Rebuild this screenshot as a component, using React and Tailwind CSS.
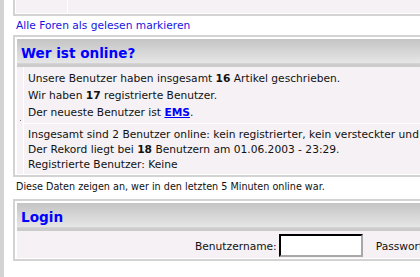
import React from "react";

const cellBg = "bg-[#f5f1f5]";
const headBg =
  "bg-[linear-gradient(180deg,#c4c4c4_0%,#e6e6e6_86%,#cdcdcd_88%,#cbcbcb_100%)]";

const CatHead = ({ title }) => (
  <div className={`flex h-[28px] items-center pl-[4px] ${headBg}`}>
    <span className="text-[13.6px] font-bold text-[#0000ff]">{title}</span>
  </div>
);

const App = () => {
  return (
    <div className="flex h-[277px] w-[420px] overflow-hidden bg-white font-['DejaVu_Sans',sans-serif] text-[10.67px] text-[#111]">
      <div className="w-[4px] shrink-0 bg-[#d3d3d3]" />
      <div className="w-[660px] shrink-0 pl-[9px]">
        {/* tail of the forum table */}
        <div className="border-x-2 border-b-2 border-[#d3d3d3] bg-white px-[1px] pb-[1px]">
          <div className="flex h-[13px] gap-[1px]">
            <div className={`w-[51px] ${cellBg}`} />
            <div className={`flex-1 ${cellBg}`} />
          </div>
        </div>

        <a className="ml-[3px] mt-[4px] block leading-[12px] text-[#1515e0]">
          Alle Foren als gelesen markieren
        </a>

        {/* who is online */}
        <div className="mt-[3px] border-2 border-[#d3d3d3] bg-white pb-[1px] pl-[2px] pt-[2px]">
          <CatHead title="Wer ist online?" />
          <div className="flex gap-[1px]">
            <div className={`flex w-[6px] items-center justify-center ${cellBg}`}>
              <div className="h-[1px] w-[1px] bg-[#777]" />
            </div>
            <div className="flex flex-1 flex-col gap-[1px] whitespace-nowrap">
              <div className={`${cellBg} pb-[2px] pl-[4px] pt-[3px] leading-[17px]`}>
                Unsere Benutzer haben insgesamt <b>16</b> Artikel geschrieben.
                <br />
                Wir haben <b>17</b> registrierte Benutzer.
                <br />
                Der neueste Benutzer ist{" "}
                <a className="font-bold text-[#0000ff] underline">EMS</a>.
              </div>
              <div className={`${cellBg} pb-[2px] pl-[4px] pt-[3px] leading-[15px]`}>
                Insgesamt sind 2 Benutzer online: kein registrierter, kein versteckter und 2 Gäste
                <br />
                Der Rekord liegt bei <b>18</b> Benutzern am 01.06.2003 - 23:29.
                <br />
                Registrierte Benutzer: Keine
              </div>
            </div>
          </div>
        </div>

        <p className="ml-[3px] mt-[4px] text-[9.65px] leading-[12px]">
          Diese Daten zeigen an, wer in den letzten 5 Minuten online war.
        </p>

        {/* login */}
        <div className="mt-[6px] border-2 border-[#d3d3d3] bg-white pb-[1px] pl-[2px] pt-[2px]">
          <CatHead title="Login" />
          <div className={`flex h-[27px] items-start whitespace-nowrap pl-[178px] pt-[3px] ${cellBg}`}>
            <span className="mt-[5px]">Benutzername:</span>
            <input
              type="text"
              className="ml-[2px] h-[23px] w-[84px] border-2 border-b-[#a8a8a8] border-l-black border-r-[#a8a8a8] border-t-black bg-white"
            />
            <span className="ml-[13px] mt-[5px]">Passwort:</span>
            <input
              type="password"
              className="ml-[3px] h-[23px] w-[84px] border-2 border-b-[#a8a8a8] border-l-black border-r-[#a8a8a8] border-t-black bg-white"
            />
          </div>
        </div>
      </div>
    </div>
  );
};

export default App;
